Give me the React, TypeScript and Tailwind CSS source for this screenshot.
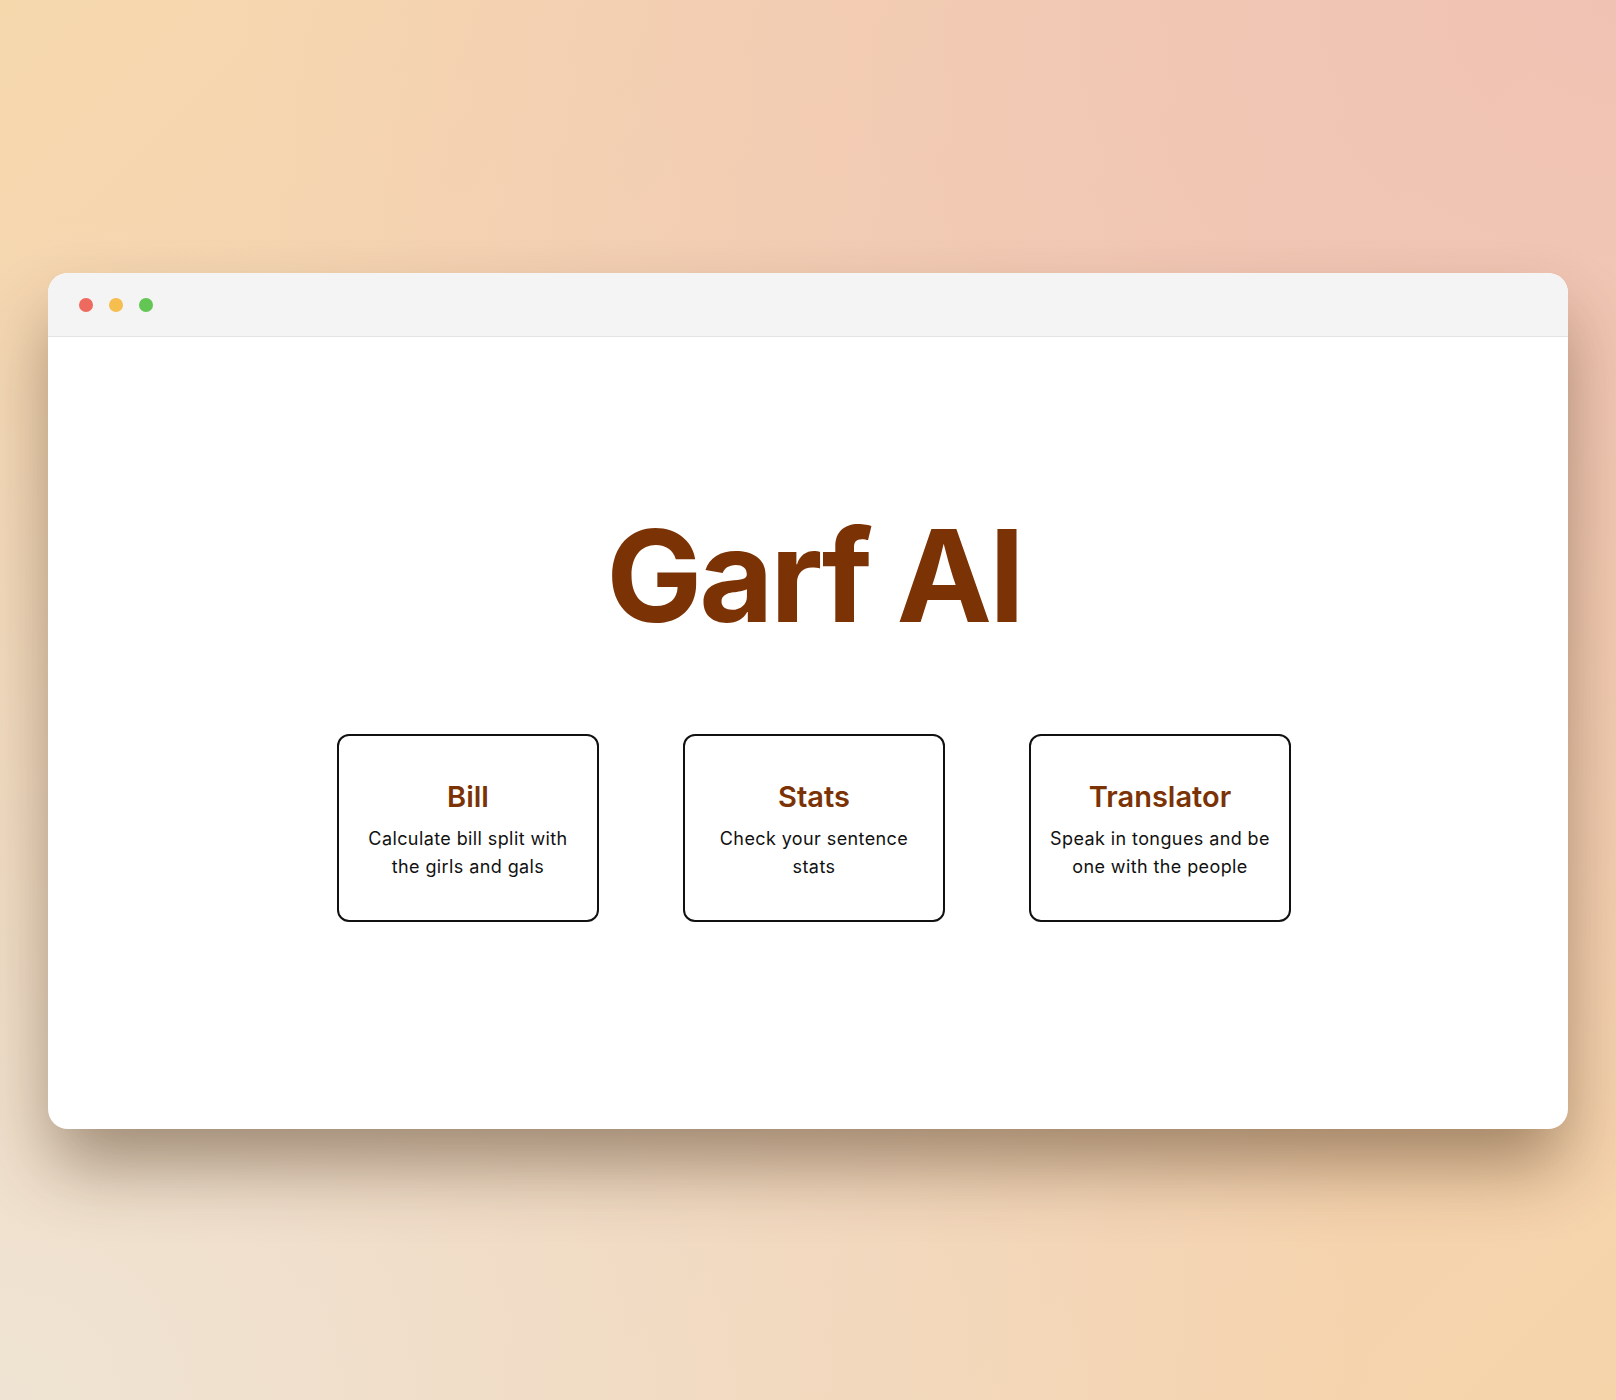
import React from 'react';

const tools = [
    { name: 'Bill', desc: 'Calculate bill split with the girls and gals' },
    { name: 'Stats', desc: 'Check your sentence stats' },
    { name: 'Translator', desc: 'Speak in tongues and be one with the people' },
];

function ToolCard({ name, desc }: { name: string; desc: string }) {
    return (
        <div className="w-[262px] h-[188px] rounded-xl border-2 border-[#111] bg-white px-4 pt-1 flex flex-col items-center justify-center text-center">
            <h2 className="text-[29px] leading-9 font-semibold text-amber-900">{name}</h2>
            <p className="mt-2.5 text-lg tracking-[0.4px] text-[#111]">{desc}</p>
        </div>
    );
}

export default function App() {
    return (
        <div
            className="min-h-[1400px] w-full px-12 pt-[273px] bg-[radial-gradient(ellipse_at_100%_0%,#f0c2b3_0%,transparent_60%),radial-gradient(ellipse_at_0%_100%,#efe4d3_0%,transparent_60%),linear-gradient(135deg,#f6d8ad_0%,#f2d0b6_50%,#f6d4aa_100%)]"
            style={{ fontFamily: 'Inter, "Noto Sans", sans-serif' }}
        >
            <div className="h-[856px] rounded-[20px] bg-white overflow-hidden flex flex-col shadow-[0_40px_70px_-5px_rgba(60,35,10,0.45)]">
                {/* title bar */}
                <div className="h-[64px] shrink-0 bg-[#f4f4f4] border-b border-[#e4e4e4] flex items-center gap-4 pl-[31px]">
                    <span className="w-[14px] h-[14px] rounded-full bg-[#ee6a5f]" />
                    <span className="w-[14px] h-[14px] rounded-full bg-[#f5be4f]" />
                    <span className="w-[14px] h-[14px] rounded-full bg-[#62c554]" />
                </div>
                <div className="flex-1 flex flex-col items-center pt-[175px] pl-3">
                    <h1 className="text-9xl leading-none font-bold tracking-tight text-amber-900">Garf AI</h1>
                    <div className="mt-[94px] flex gap-[84px]">
                        {tools.map((t) => (
                            <ToolCard key={t.name} name={t.name} desc={t.desc} />
                        ))}
                    </div>
                </div>
            </div>
        </div>
    );
}
